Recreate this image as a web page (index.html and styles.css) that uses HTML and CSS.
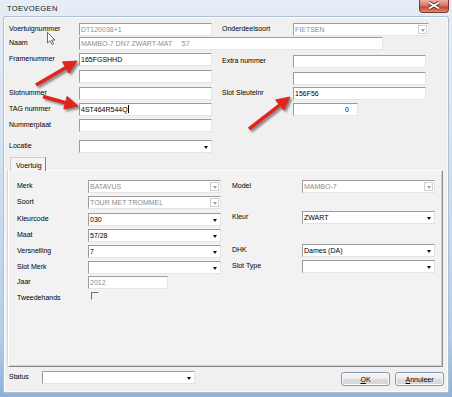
FILE: index.html
```html
<!DOCTYPE html>
<html lang="nl">
<head>
  <meta charset="utf-8" />
  <title>TOEVOEGEN</title>
  <link rel="stylesheet" href="styles.css">
</head>
<body>
  <div class="window">
    <div class="titlebar">
      <span class="title">TOEVOEGEN</span>
      <div class="close">
        <svg width="30" height="13" viewBox="0 0 30 13">
          <path d="M10 3.5 L20 9.5 M20 3.5 L10 9.5" stroke="#6a2219" stroke-width="3.4" fill="none"/>
          <path d="M10 3.5 L20 9.5 M20 3.5 L10 9.5" stroke="#fff" stroke-width="1.8" fill="none"/>
        </svg>
      </div>
    </div>

    <div class="client">
      <!-- bovenste velden -->
      <div class="top">
        <div class="row">
          <span class="lbl">Voertuignummer</span>
          <div class="field w133 dis">DT120038+1</div>
          <span class="lbl lbl-r">Onderdeelsoort</span>
          <div class="field combo w136 dis"><span class="val">FIETSEN</span><span class="btn off"></span></div>
        </div>
        <div class="row">
          <span class="lbl">Naam</span>
          <div class="field w304 dis">MAMBO-7 DN7 ZWART-MAT     57</div>
        </div>
        <div class="row">
          <span class="lbl">Framenummer</span>
          <div class="field w133">165FGSHHD</div>
          <span class="lbl lbl-r low">Extra nummer</span>
          <div class="field w133 low"></div>
        </div>
        <div class="row">
          <span class="lbl"></span>
          <div class="field w133"></div>
          <span class="lbl lbl-r"></span>
          <div class="field w133 low"></div>
        </div>
        <div class="row">
          <span class="lbl">Slotnummer</span>
          <div class="field w133"></div>
          <span class="lbl lbl-r">Slot Sleutelnr</span>
          <div class="field w133">156F56</div>
        </div>
        <div class="row">
          <span class="lbl">TAG nummer</span>
          <div class="field w133">4ST464R544Q<span class="caret"></span></div>
          <span class="lbl lbl-r"></span>
          <div class="field w65 num">0</div>
        </div>
        <div class="row">
          <span class="lbl">Nummerplaat</span>
          <div class="field w133"></div>
        </div>
        <div class="row">
          <span class="lbl">Locatie</span>
          <div class="field combo w133"><span class="val"></span><span class="btn"></span></div>
        </div>
      </div>

      <!-- tabblad -->
      <div class="tabs">
        <div class="tab">Voertuig</div>
      </div>
      <div class="panel">
        <div class="col col-l">
          <div class="prow h16"><span class="plbl">Merk</span><div class="field combo w133 dis"><span class="val">BATAVUS</span><span class="btn off"></span></div></div>
          <div class="prow h17"><span class="plbl">Soort</span><div class="field combo w133 dis"><span class="val">TOUR MET TROMMEL</span><span class="btn off"></span></div></div>
          <div class="prow h16"><span class="plbl">Kleurcode</span><div class="field combo w133"><span class="val">030</span><span class="btn"></span></div></div>
          <div class="prow h16"><span class="plbl">Maat</span><div class="field combo w133"><span class="val">57/28</span><span class="btn"></span></div></div>
          <div class="prow h16"><span class="plbl">Versnelling</span><div class="field combo w133"><span class="val">7</span><span class="btn"></span></div></div>
          <div class="prow h15"><span class="plbl">Slot Merk</span><div class="field combo w133"><span class="val"></span><span class="btn"></span></div></div>
          <div class="prow h16"><span class="plbl">Jaar</span><div class="field w80 dis">2012</div></div>
          <div class="prow h16"><span class="plbl">Tweedehands</span><span class="check"></span></div>
        </div>
        <div class="col col-r">
          <div class="prow h31"><span class="plbl rl">Model</span><div class="field combo w133 dis"><span class="val">MAMBO-7</span><span class="btn off"></span></div></div>
          <div class="prow h33"><span class="plbl rl">Kleur</span><div class="field combo w133"><span class="val">ZWART</span><span class="btn"></span></div></div>
          <div class="prow h16"><span class="plbl rl">DHK</span><div class="field combo w133"><span class="val">Dames (DA)</span><span class="btn"></span></div></div>
          <div class="prow h16"><span class="plbl rl">Slot Type</span><div class="field combo w133"><span class="val"></span><span class="btn"></span></div></div>
        </div>
      </div>

      <!-- onderste balk -->
      <div class="bottom">
        <span class="lbl status-lbl">Status</span>
        <div class="field combo w153"><span class="val"></span><span class="btn"></span></div>
        <button class="dlg-btn ok"><u>O</u>K</button>
        <button class="dlg-btn"><u>A</u>nnuleer</button>
      </div>
    </div>

    <!-- rode pijlen en muiscursor -->
    <svg class="overlay" width="452" height="397" viewBox="0 0 452 397">
      <g class="arrows" fill="#e2241c" stroke="#e2241c">
        <line x1="36" y1="85" x2="66" y2="67.5" stroke-width="3.6"/>
        <polygon points="77,61 68.9,73.1 62.5,61.9" stroke-width="1"/>
        <line x1="43" y1="96.5" x2="65.6" y2="102.7" stroke-width="3.6"/>
        <polygon points="78,106 63.8,109 67.1,96.4" stroke-width="1"/>
        <line x1="249" y1="129" x2="280" y2="104.8" stroke-width="3.6"/>
        <polygon points="290,97 283.7,110.1 275.7,99.9" stroke-width="1"/>
      </g>
      <path d="M47.5 32.5 L47.5 43 L50 40.6 L52 44.5 L53.6 43.7 L51.7 40 L55 40 Z" fill="#fff" stroke="#444" stroke-width="0.8"/>
    </svg>
  </div>
</body>
</html>
```

FILE: styles.css
```css
body {
  margin: 0;
  font-family: "Liberation Sans", Arial, sans-serif;
  font-size: 7px;
  color: #000;
  overflow: hidden;
}

.window {
  position: relative;
  width: 452px;
  height: 397px;
  box-sizing: border-box;
  padding: 0 4px 5px 4px;
  display: flex;
  flex-direction: column;
  background: linear-gradient(#e6edf6, #d3e1f1 40%, #b4cce8 85%, #8eb0da);
}

.titlebar {
  height: 17px;
  display: flex;
  align-items: flex-start;
}

.title {
  font-size: 7.6px;
  margin: 4px 0 0 3px;
  color: #141414;
  letter-spacing: 0.3px;
}

.close {
  margin-left: auto;
  margin-right: -1px;
  width: 30px;
  height: 13px;
  border-radius: 0 0 4px 4px;
  border: 1px solid #7a3a33;
  border-top: none;
  box-sizing: border-box;
  background: linear-gradient(#eab0a4, #d77a66 45%, #c8472f 60%, #de8c72);
}

.close svg {
  display: block;
  margin: -1px 0 0 -1px;
}

.client {
  flex: 1;
  background: #f0f0f0;
  border: 1px solid #fbfcfd;
  box-shadow: 0 0 0 1px #aebfd4;
  border-radius: 2px 2px 0 0;
  padding: 5px 0 0 4px;
  display: flex;
  flex-direction: column;
}

.top {
  display: grid;
  grid-template-rows: 14px 16px 17px 17px 16px 16px 21px 13px;
}

.row {
  display: flex;
  align-items: flex-start;
}

.lbl {
  width: 70px;
  flex: none;
  line-height: 12px;
  white-space: nowrap;
}

.lbl-r {
  margin-left: 10px;
  width: 71px;
}

.low {
  margin-top: 2px;
}

.field {
  height: 13px;
  flex: none;
  box-sizing: border-box;
  background: #fff;
  border: 1px solid;
  border-color: #9c9c9c #e4e4e4 #e4e4e4 #9c9c9c;
  padding-left: 1px;
  line-height: 11px;
  white-space: pre;
  overflow: hidden;
}

.dis {
  color: #8c8c8c;
}

.w133 { width: 133px; }
.w136 { width: 136px; }
.w304 { width: 304px; }
.w65 { width: 65px; }
.w80 { width: 80px; }
.w153 { width: 153px; }

.num {
  text-align: right;
  padding-right: 8px;
}

.caret {
  display: inline-block;
  width: 1px;
  height: 8px;
  background: #000;
  vertical-align: -1px;
}

.combo {
  display: flex;
  align-items: center;
}

.combo .val {
  flex: 1;
  line-height: 11px;
}

.combo .btn {
  width: 9px;
  height: 9px;
  margin-right: 1px;
  box-sizing: border-box;
  display: flex;
  align-items: center;
  justify-content: center;
}

.combo .btn::after {
  content: "";
  border-left: 2.5px solid transparent;
  border-right: 2.5px solid transparent;
  border-top: 3px solid #111;
  margin-top: 2px;
}

.combo .btn.off {
  border: 1px solid #cfcfcf;
}

.combo .btn.off::after {
  border-top-color: #a0a0a0;
  margin-top: 1px;
}

.tabs {
  margin-top: 4px;
  height: 13px;
  display: flex;
  position: relative;
  z-index: 1;
}

.tab {
  margin-left: 1px;
  width: 36px;
  height: 14px;
  box-sizing: border-box;
  border: 1px solid #cdcdcd;
  border-right-color: #808080;
  border-bottom: none;
  background: #f4f4f4;
  padding: 3px 0 0 5px;
  line-height: 9px;
}

.panel {
  margin-left: -1px;
  width: 435px;
  height: 197px;
  box-sizing: border-box;
  border: 1px solid;
  border-color: #ffffff #8c8c8c #8c8c8c #ffffff;
  box-shadow: inset -1px -1px 0 #cfcfcf, -1px 0 0 #d6d6d6;
  background: #f2f2f2;
  padding: 9px 0 0 8px;
  display: flex;
  align-items: flex-start;
}

.col {
  display: flex;
  flex-direction: column;
}

.col-r {
  margin-left: 11px;
}

.prow {
  display: flex;
  align-items: flex-start;
}

.h15 { height: 15px; }
.h16 { height: 16px; }
.h17 { height: 17px; }
.h31 { height: 31px; }
.h33 { height: 33px; }

.plbl {
  width: 71px;
  flex: none;
  line-height: 11px;
  white-space: nowrap;
}

.plbl.rl {
  width: 70px;
}

.check {
  margin: 0 0 0 3px;
  width: 8px;
  height: 8px;
  box-sizing: border-box;
  border: 1px solid;
  border-color: #6e6e6e #f7f7f7 #f7f7f7 #6e6e6e;
}

.bottom {
  margin-top: 4px;
  display: flex;
  align-items: flex-start;
}

.status-lbl {
  width: 33px;
  line-height: 11px;
}

.dlg-btn {
  margin: 1px 0 0 5px;
  width: 49px;
  height: 14px;
  padding: 0;
  font-family: "Liberation Sans", Arial, sans-serif;
  font-size: 7px;
  color: #000;
  border: 1px solid #8497b0;
  border-radius: 3px;
  background: linear-gradient(#f6f6f6, #ebebeb 50%, #dcdcdc 51%, #d6d6d6);
  box-shadow: inset 0 0 0 1px #fbfbfb;
}

.dlg-btn.ok {
  margin-left: auto;
}

.bottom .dlg-btn:last-child {
  margin-right: 3px;
}

.overlay {
  position: absolute;
  top: 0;
  left: 0;
  pointer-events: none;
}

.arrows {
  filter: drop-shadow(2px 2px 1px rgba(0, 0, 0, 0.45));
}
```
